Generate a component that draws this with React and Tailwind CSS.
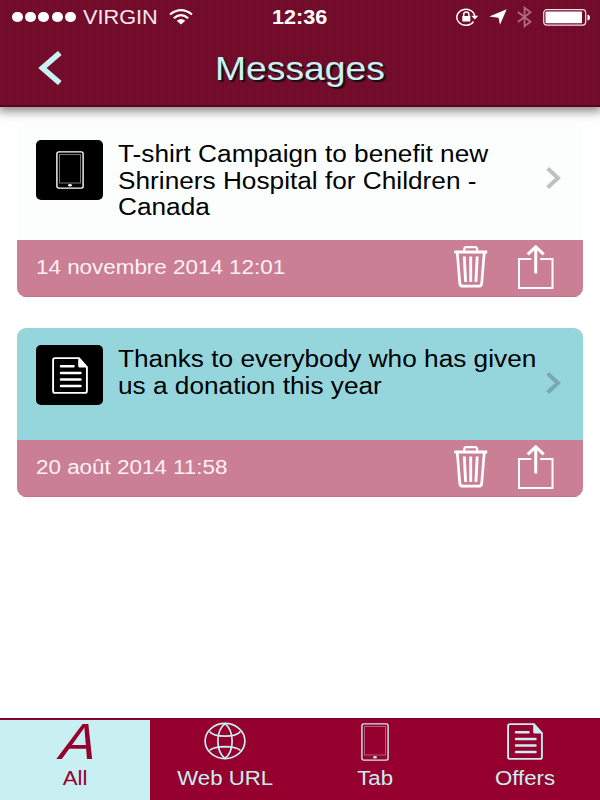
import React from 'react';

function PhoneIcon({ className, inner = '#777' }) {
  return (
    <svg className={className} viewBox="0 0 28 38" fill="none" stroke="currentColor">
      <rect x="0.9" y="0.9" width="26.2" height="36.2" rx="1.8" strokeWidth="1.4" />
      <rect x="3.5" y="3.5" width="21" height="28.5" stroke={inner} strokeWidth="1" />
      <ellipse cx="14" cy="34.3" rx="1.9" ry="1.3" fill="currentColor" stroke="none" />
    </svg>
  );
}

function DocIcon({ className }) {
  return (
    <svg className={className} viewBox="0 0 36 37" fill="none" stroke="currentColor">
      <path d="M27 1.1H3.2Q1.1 1.1 1.1 3V34Q1.1 35.9 3.2 35.9H32.8Q34.9 35.9 34.9 34V10Z" strokeWidth="1.9" />
      <path d="M26.2 0.6L35.5 10.5H28Q26.2 10.5 26.2 9Z" fill="currentColor" stroke="none" />
      <path d="M9 9.3H21.5M9 16H28.5M9 22.5H28.5M9 29H28.5" strokeWidth="2.5" strokeLinecap="round" />
    </svg>
  );
}

function GlobeIcon({ className }) {
  return (
    <svg className={className} viewBox="0 0 42 38" fill="none" stroke="currentColor" strokeWidth="1.7">
      <ellipse cx="21" cy="19" rx="19.9" ry="17.6" />
      <path d="M21 1.6C11.5 9 11.500 29 21 36.400C30.500 29 30.500 9 21 1.600Z" />
      <path d="M5.500 9.500Q9 14 21 14.200Q33 14 36.500 9.500M5.500 28.500Q9 24.800 21 24.600Q33 24.800 36.500 28.500" />
    </svg>
  );
}

function TrashIcon() {
  return (
    <svg className="mt-[1px] h-[42px] w-[34px]" viewBox="0 0 34 42" fill="none" stroke="white">
      <path d="M0.300 6H33.200" strokeWidth="2.800" />
      <path d="M10.300 5.500V3.300Q10.300 1.200 12.500 1.200H21Q23.200 1.200 23.200 3.300V5.500" strokeWidth="2.200" />
      <path d="M3.300 7L5.800 37.500Q6.100 40.200 9 40.200H24.500Q27.400 40.200 27.700 37.500L30.200 7" strokeWidth="2.700" />
      <path d="M10.300 10.500L11.600 36M16.700 10.500V36M23.200 10.500L21.900 36" strokeWidth="2.900" />
    </svg>
  );
}

function ShareIcon() {
  return (
    <svg className="h-[44px] w-[36px]" viewBox="0 0 36 44" fill="none" stroke="white">
      <path d="M13.300 14H1V43H34.500V14H22" strokeWidth="2" />
      <path d="M17.700 2V28.500" strokeWidth="3" />
      <path d="M9.700 9.300L17.700 1.900L25.700 9.300" strokeWidth="3.100" />
    </svg>
  );
}

function Header() {
  return (
    <header className="relative z-10 h-[107px] border-b-2 border-[#64001f] bg-[#730d2b] bg-[repeating-linear-gradient(90deg,transparent_0px,transparent_2px,rgba(70,0,20,0.09)_3px,rgba(70,0,20,0.09)_4px)] shadow-[0_2px_10px_2px_rgba(0,0,0,0.5)]">
      <div className="flex h-[34px] items-center text-[20px] leading-none text-white">
        <div className="flex w-[272px] items-center pl-[12px]">
          <div className="flex gap-[2.200px]">
            {[0, 1, 2, 3, 4].map((i) => (
              <i key={i} className="h-[10px] w-[11px] rounded-full bg-white" />
            ))}
          </div>
          <span className="ml-[7px] inline-block w-[86px] origin-left scale-x-[1.085] text-[#fbe9ee]">VIRGIN</span>
          <svg className="h-[16px] w-[24px]" viewBox="0 0 24 16" fill="none" stroke="white" strokeWidth="2.100">
            <path d="M1 5.500Q12 -3.300 23 5.500M4.800 9.200Q12 3 19.200 9.200" />
            <path d="M7.700 11.700Q12 8.200 16.300 11.700L12 15.500Z" fill="white" stroke="none" />
          </svg>
        </div>
        <span className="w-[184px] origin-left scale-x-[1.080] font-bold">12:36</span>
        <svg className="h-[18px] w-[23px]" viewBox="0 0 23 18" fill="none" stroke="white" strokeWidth="1.500">
          <path d="M17.500 13.500A9 8 0 1 1 18.800 8.500" />
          <path d="M15.300 7.800H22.300L18.800 11.500Z" fill="white" stroke="none" />
          <rect x="6.300" y="8" width="8" height="5.500" fill="white" stroke="none" />
          <path d="M7.700 8V6.300Q7.700 4 10.300 4Q12.900 4 12.900 6.300V8" />
        </svg>
        <svg className="ml-[10px] h-[16px] w-[18px]" viewBox="0 0 18 16" fill="white">
          <path d="M17.700 0.300L11 15.700L9.500 8.700L0.300 7.500Z" />
        </svg>
        <svg className="ml-[10px] h-[22px] w-[15px]" viewBox="0 0 15 22" fill="none" stroke="#b3697f" strokeWidth="1.800">
          <path d="M1 6L13.500 15.800L7.500 20.300V1.700L13.500 6.200L1 16" />
        </svg>
        <svg className="ml-[11px] h-[17px] w-[48px]" viewBox="0 0 48 17">
          <rect x="0.700" y="0.700" width="42" height="15.400" rx="3" fill="none" stroke="#f6dfe6" strokeWidth="1.200" />
          <rect x="2.500" y="2.500" width="36.500" height="11.800" rx="0.800" fill="white" />
          <path d="M44.500 5.500Q47 6 47 8.500Q47 11 44.500 11.500Z" fill="white" />
        </svg>
      </div>
      <div className="flex h-[69px] items-center">
        <svg className="ml-[38px] h-[34px] w-[24px] -translate-y-px" viewBox="0 0 24 34" fill="none" stroke="#c9f2f5" strokeWidth="5.600">
          <path d="M21.800 2L4.500 17L21.800 32" />
        </svg>
        <h1 className="ml-[153px] origin-left scale-x-[1.130] text-[33px] leading-none text-[#c9f2f5] [text-shadow:2px_2px_1px_#111]">Messages</h1>
      </div>
    </header>
  );
}

function MessageCard({ icon, lines, date, height, body, arrow }) {
  return (
    <article className="overflow-hidden rounded-[9px]">
      <div className={'flex pl-[19px] ' + height + ' ' + body}>
        <div className="flex h-[60px] w-[67px] items-center justify-center rounded-[5px] bg-black text-white">{icon}</div>
        <h2 className="mt-[1px] ml-[15px] w-[376px] origin-left scale-x-[1.140] text-[23px] leading-[26.700px] whitespace-nowrap text-black">
          {lines.map((l) => (
            <span key={l} className="block">{l}</span>
          ))}
        </h2>
        <svg className="mt-[26px] ml-[52px] h-[24px] w-[16px]" viewBox="0 0 16 24" fill="none" stroke={arrow} strokeWidth="4">
          <path d="M1.700 2.600L12 12L1.700 21.400" />
        </svg>
      </div>
      <footer className="flex h-[57px] items-start border-b border-[#c2708b] bg-[#ca7f95] pl-[19px]">
        <time className="mt-[16px] w-[418px] origin-left scale-x-[1.149] text-[19.500px] leading-[22px] text-[#fff1f5]">{date}</time>
        <div className="mt-[5px] flex gap-[30px]">
          <TrashIcon />
          <ShareIcon />
        </div>
      </footer>
    </article>
  );
}

function TabItem({ label, active, children }) {
  return (
    <button className={'flex h-full w-[150px] flex-col items-center ' + (active ? 'bg-[#c8f0f2] text-[#96002e]' : 'text-[#c8f0f2]')}>
      <span className="flex h-[44px] items-center">{children}</span>
      <span className="mt-[2px] scale-x-[1.110] text-[20px] leading-[24px]">{label}</span>
    </button>
  );
}

export default function App() {
  return (
    <div className="flex h-[800px] w-[600px] flex-col overflow-hidden bg-white font-['Liberation_Sans',Arial,sans-serif]">
      <Header />
      <main className="flex flex-1 flex-col gap-[31px] px-[17px] pt-[16px]">
        <MessageCard
          icon={<PhoneIcon className="h-[38px] w-[28px]" />}
          lines={['T-shirt Campaign to benefit new', 'Shriners Hospital for Children -', 'Canada']}
          date="14 novembre 2014 12:01"
          height="h-[117px] pt-[17px]"
          body="bg-[#fcfefe]"
          arrow="#c0c0c0"
        />
        <MessageCard
          icon={<DocIcon className="h-[37px] w-[36px]" />}
          lines={['Thanks to everybody who has given', 'us a donation this year']}
          date="20 août 2014 11:58"
          height="h-[112px] pt-[17px]"
          body="bg-[#95d6dc]"
          arrow="#7aa8ad"
        />
      </main>
      <nav className="flex h-[82px] border-t-2 border-[#850027] bg-[#96002e]">
        <TabItem label="All" active>
          <span className="ml-[8px] inline-block scale-x-[1.060] -skew-x-6 text-[51px] leading-[44px] italic">A</span>
        </TabItem>
        <TabItem label="Web URL">
          <GlobeIcon className="mt-[-2px] h-[38px] w-[42px]" />
        </TabItem>
        <TabItem label="Tab">
          <PhoneIcon className="mt-[-1px] h-[38px] w-[28px]" inner="#b65c7b" />
        </TabItem>
        <TabItem label="Offers">
          <DocIcon className="mt-[-1px] h-[37px] w-[36px]" />
        </TabItem>
      </nav>
    </div>
  );
}
